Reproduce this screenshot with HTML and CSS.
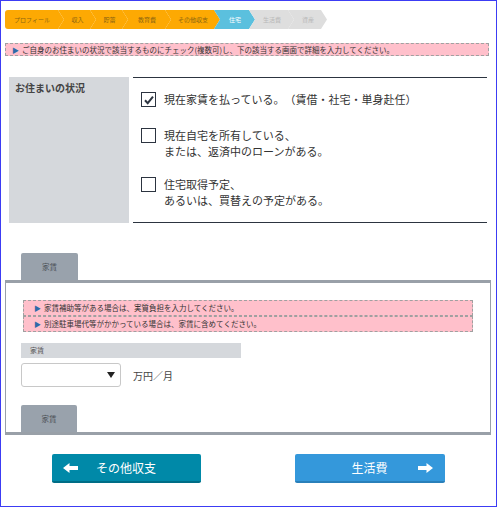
FILE: index.html
```html
<!DOCTYPE html>
<html lang="ja">
<head>
<meta charset="utf-8">
<title>住宅</title>
<link rel="stylesheet" href="styles.css">
</head>
<body>
<div class="page">
  <nav class="steps">
    <div class="step done first w1">プロフィール</div>
    <div class="step done w2">収入</div>
    <div class="step done w2">貯蓄</div>
    <div class="step done w4">教育費</div>
    <div class="step done w5">その他収支</div>
    <div class="step active w6">住宅</div>
    <div class="step todo w7">生活費</div>
    <div class="step todo w8">資産</div>
  </nav>

  <p class="notice"><span class="tri">▶</span>ご自身のお住まいの状況で該当するものにチェック(複数可)し、下の該当する画面で詳細を入力してください。</p>

  <section class="status">
    <div class="status-label">お住まいの状況</div>
    <div class="status-options">
      <div class="opt opt1">
        <span class="cb"><svg width="12" height="12" viewBox="0 0 12 12"><path d="M2 6.3 L4.7 9.2 L10 2.6" fill="none" stroke="#2c3440" stroke-width="2"/></svg></span>
        <span class="opt-text">現在家賃を払っている。（賃借・社宅・単身赴任）</span>
      </div>
      <div class="opt opt2">
        <span class="cb"></span>
        <span class="opt-text">現在自宅を所有している、<br>または、返済中のローンがある。</span>
      </div>
      <div class="opt">
        <span class="cb"></span>
        <span class="opt-text">住宅取得予定、<br>あるいは、買替えの予定がある。</span>
      </div>
    </div>
  </section>

  <div class="tabs"><div class="tab">家賃</div></div>

  <div class="panel">
    <div class="notes">
      <p class="note"><span class="tri">▶</span>家賃補助等がある場合は、実質負担を入力してください。</p>
      <p class="note"><span class="tri">▶</span>別途駐車場代等がかかっている場合は、家賃に含めてください。</p>
    </div>
    <div class="field-label">家賃</div>
    <div class="field-row">
      <div class="select"><svg class="caret" width="8" height="6" viewBox="0 0 8 6"><path d="M0 0 H8 L4 6 Z" fill="#222"/></svg></div>
      <span class="unit">万円／月</span>
    </div>
    <div class="tab tab-bottom">家賃</div>
  </div>

  <div class="nav-buttons">
    <button class="btn btn-prev">
      <svg class="ico ico-left" width="15" height="10" viewBox="0 0 15 10"><path d="M0 5 L6.5 0 V3 H15 V7 H6.5 V10 Z" fill="#fff"/></svg>
      <span class="btn-text">その他収支</span>
      <span></span>
    </button>
    <button class="btn btn-next">
      <span></span>
      <span class="btn-text">生活費</span>
      <svg class="ico ico-right" width="15" height="10" viewBox="0 0 15 10"><path d="M15 5 L8.5 0 V3 H0 V7 H8.5 V10 Z" fill="#fff"/></svg>
    </button>
  </div>
</div>
</body>
</html>
```

FILE: styles.css
```css
* { box-sizing: border-box; }
html, body { margin: 0; padding: 0; }
body {
  font-family: "Noto Sans CJK JP", "Noto Sans", sans-serif;
  color: #333;
  background: #fff;
  text-spacing-trim: space-all;
}
.page {
  width: 497px;
  height: 507px;
  border: 1px solid #3c3cf4;
  padding: 9px 5px 0 4px;
  overflow: hidden;
}

/* steps */
.steps {
  display: flex;
  height: 19px;
}
.step {
  height: 19px;
  font-size: 6px;
  line-height: 19px;
  text-align: center;
  padding-left: 6px;
  padding-right: 5px;
  margin-left: -6px;
  white-space: nowrap;
  clip-path: polygon(0 0, calc(100% - 6px) 0, 100% 50%, calc(100% - 6px) 100%, 0 100%, 6px 50%);
}
.step.first {
  margin-left: 0;
  padding-left: 0;
  border-radius: 3px 0 0 3px;
  clip-path: polygon(0 0, calc(100% - 6px) 0, 100% 50%, calc(100% - 6px) 100%, 0 100%);
}
.w1 { width: 59px; }
.w2 { width: 38px; }
.w4 { width: 49px; }
.w5 { width: 55px; }
.w6 { width: 41px; }
.w7 { width: 45px; }
.w8 { width: 39px; }
.step.done { background: #fda903; color: #8a6412; }
.step.active { background: #5bc0de; color: #fff; }
.step.todo { background: #dedede; color: #b8b8b8; }

/* notice */
.notice {
  margin: 14px 2px 0 0;
  height: 13px;
  background: #ffc0cb;
  border: 1px dashed #a0a0a0;
  font-size: 7.5px;
  line-height: 11px;
  padding-left: 6px;
  color: #333;
}
.tri {
  color: #2e6aa8;
  margin-right: 3px;
  font-size: 7px;
}

/* status section */
.status {
  margin: 21px 4px 0 4px;
  display: grid;
  grid-template-columns: 120px 1fr;
  column-gap: 4px;
  height: 146px;
}
.status-label {
  background: #d5d8dc;
  font-size: 10px;
  font-weight: bold;
  color: #444;
  padding: 4px 6px;
  line-height: 14px;
}
.status-options {
  border-top: 1.5px solid #2c3440;
  border-bottom: 1.5px solid #2c3440;
  padding: 13px 0 0 8px;
}
.opt {
  display: flex;
  align-items: flex-start;
  gap: 8px;
}
.opt1 { margin-bottom: 20px; }
.opt2 { margin-bottom: 17px; }
.cb {
  flex: none;
  width: 15px;
  height: 15px;
  margin-top: 1px;
  border: 1.5px solid #2c3440;
  display: flex;
  align-items: center;
  justify-content: center;
  background: #fff;
}
.opt-text {
  font-size: 11px;
  line-height: 16px;
  color: #333;
}

/* tabs */
.tabs {
  margin-top: 30px;
  padding-left: 16px;
  display: flex;
}
.tab {
  width: 57px;
  height: 27px;
  background: #99a2ac;
  border-radius: 2px 2px 0 0;
  font-size: 7.5px;
  line-height: 27px;
  text-align: center;
  color: #4a4f55;
}

.panel {
  border-top: 3px solid #99a0a8;
  border-left: 1px solid #99a0a8;
  border-right: 1px solid #99a0a8;
  border-bottom: 3px solid #99a0a8;
  padding: 17px 17px 0 15px;
}
.notes { margin-left: 2px; }
.note {
  margin: 0;
  height: 16px;
  background: #ffc0cb;
  border: 1px dashed #a0a0a0;
  font-size: 7.5px;
  line-height: 14px;
  padding-left: 10px;
  color: #333;
}
.field-label {
  margin-top: 11px;
  width: 220px;
  height: 15px;
  background: #d5d8dc;
  font-size: 7px;
  line-height: 15px;
  padding-left: 9px;
  color: #555;
}
.field-row {
  margin-top: 5px;
  display: flex;
  align-items: center;
  gap: 12px;
}
.select {
  width: 100px;
  height: 24px;
  border: 1px solid #c8c8c8;
  border-radius: 3px;
  background: #fff;
  display: flex;
  align-items: center;
  justify-content: flex-end;
  padding-right: 5px;
}
.unit {
  font-size: 10px;
  color: #444;
}
.tab-bottom {
  margin-top: 18px;
  width: 56px;
}

/* buttons */
.nav-buttons {
  margin-top: 19px;
  display: flex;
  justify-content: center;
  gap: 94px;
  padding-left: 1px;
}
.btn {
  width: 149px;
  height: 29px;
  border: none;
  border-radius: 2px;
  padding: 0 12px 0 11px;
  display: grid;
  grid-template-columns: 1fr auto 1fr;
  align-items: center;
  font-family: "Noto Sans CJK JP", "Noto Sans", sans-serif;
  font-size: 12px;
  color: #fff;
  cursor: pointer;
}
.btn-prev {
  width: 149px;
  background: #0089a8;
  border-bottom: 2px solid #006d86;
}
.btn-next {
  width: 150px;
  background: #3498db;
  border-bottom: 2px solid #2a80ba;
}
.btn-text { line-height: 27px; }
.ico-left { justify-self: start; }
.ico-right { justify-self: end; }
```
